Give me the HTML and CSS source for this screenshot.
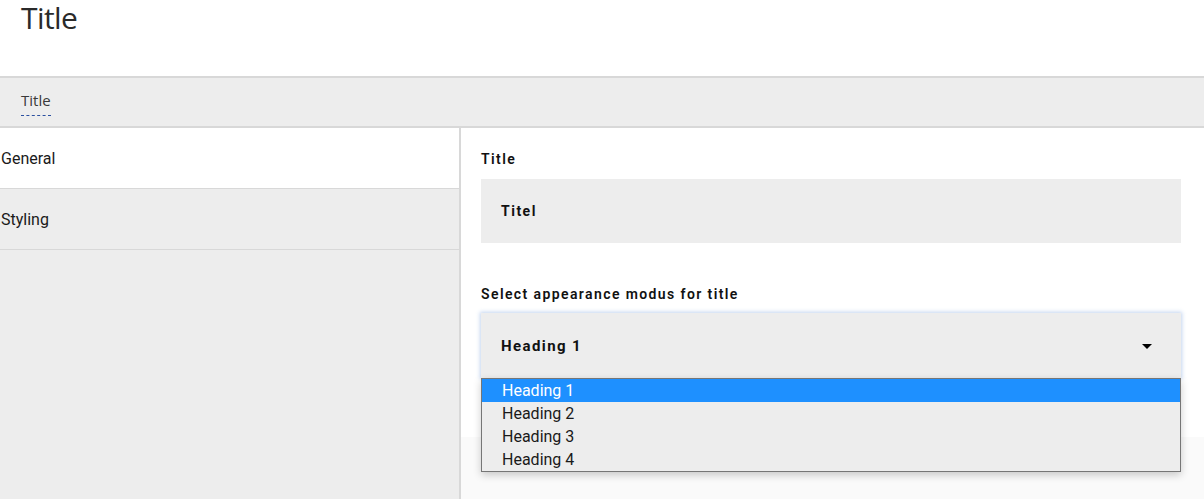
FILE: index.html
```html
<!DOCTYPE html>
<html>
<head>
<meta charset="utf-8">
<link rel="stylesheet" href="styles.css">
</head>
<body>
<header class="page-header">
  <h1 class="page-title">Title</h1>
</header>
<nav class="tabbar">
  <span class="tab">Title</span>
</nav>
<main class="editor">
  <aside class="sidebar">
    <div class="side-item active">General</div>
    <div class="side-item">Styling</div>
  </aside>
  <section class="panel">
    <div class="panel-body">
      <label class="field-label">Title</label>
      <div class="input">Titel</div>
      <label class="field-label second">Select appearance modus for title</label>
      <div class="select-wrap">
        <div class="select">
          <span>Heading 1</span>
          <svg class="caret" width="10" height="5" viewBox="0 0 10 5"><path d="M0 0H10L5 5Z" fill="#000"/></svg>
        </div>
        <ul class="options">
          <li class="option selected">Heading 1</li>
          <li class="option">Heading 2</li>
          <li class="option">Heading 3</li>
          <li class="option">Heading 4</li>
        </ul>
      </div>
    </div>
    <div class="panel-rest"></div>
  </section>
</main>
</body>
</html>
```
FILE: styles.css
```css
html, body {
  margin: 0;
  padding: 0;
  height: 100%;
}
body {
  font-family: Roboto, "Liberation Sans", sans-serif;
  background: #fff;
  overflow: hidden;
}
.page-header {
  background: #fff;
  border-bottom: 2px solid #d8d8d8;
  box-sizing: border-box;
  height: 78px;
}
.page-title {
  margin: 0;
  padding-left: 21px;
  font-family: "Open Sans", sans-serif;
  font-weight: 500;
  font-size: 30px;
  line-height: 36px;
  color: #2a2a2a;
  letter-spacing: -0.6px;
}
.tabbar {
  height: 50px;
  box-sizing: border-box;
  background: #ededed;
  border-bottom: 2px solid #d8d8d8;
  padding-left: 21px;
  display: flex;
  align-items: flex-start;
}
.tab {
  margin-top: 12px;
  font-family: "Open Sans", sans-serif;
  font-size: 15px;
  line-height: 20px;
  color: #3a3a3a;
  border-bottom: 1px dashed #2b50a0;
  padding-bottom: 5px;
}
.editor {
  display: flex;
  height: calc(100% - 128px);
}
.sidebar {
  width: 459px;
  flex: none;
  background: #ededed;
  border-right: 2px solid #d8d8d8;
}
.side-item {
  border-bottom: 1px solid #d8d8d8;
  padding-left: 1px;
  padding-top: 1px;
  box-sizing: border-box;
  height: 61px;
  display: flex;
  align-items: center;
  font-size: 16px;
  color: #1a1a1a;
}
.side-item.active {
  background: #fff;
}
.panel {
  flex: 1;
  display: flex;
  flex-direction: column;
  background: #fafafa;
}
.panel-body {
  background: #fff;
  padding: 21px 23px 59px 20px;
  display: flex;
  flex-direction: column;
}
.field-label {
  font-size: 14px;
  line-height: 20px;
  font-weight: 600;
  letter-spacing: 1.4px;
  color: #111;
}
.field-label.second {
  margin-top: 41px;
}
.input {
  margin-top: 10px;
  height: 64px;
  background: #ededed;
  padding-left: 20px;
  display: flex;
  align-items: center;
  font-size: 14px;
  font-weight: 700;
  letter-spacing: 1.5px;
  color: #111;
}
.select-wrap {
  position: relative;
  margin-top: 9px;
}
.select {
  height: 65px;
  background: #ededed;
  padding: 1px 29px 0 20px;
  box-sizing: border-box;
  display: flex;
  align-items: center;
  justify-content: space-between;
  font-size: 15px;
  font-weight: 700;
  letter-spacing: 1.4px;
  color: #111;
  box-shadow: 0 0 4px 1px rgba(120, 160, 220, 0.45);
}
.caret {
  display: block;
}
.options {
  position: absolute;
  left: 0;
  right: 0;
  top: 65px;
  margin: 0;
  padding: 0;
  list-style: none;
  background: #ededed;
  border: 1px solid #767676;
  box-shadow: 0 3px 8px rgba(0, 0, 0, 0.2);
}
.option {
  height: 23px;
  line-height: 23px;
  padding-left: 20px;
  font-size: 16px;
  color: #1a1a1a;
}
.option.selected {
  background: #1e90ff;
  color: #fff;
}
.panel-rest {
  flex: 1;
}
```
